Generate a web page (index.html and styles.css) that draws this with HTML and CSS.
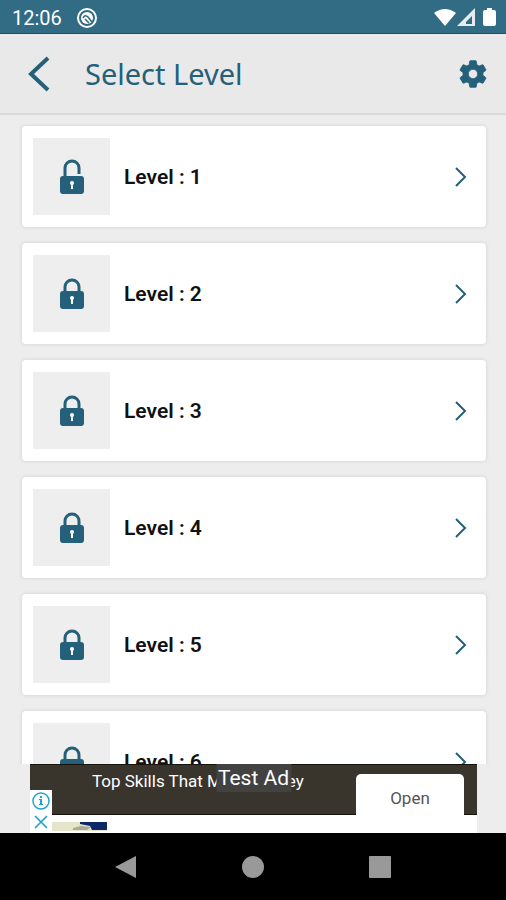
FILE: index.html
```html
<!DOCTYPE html>
<html lang="en">
<head>
<meta charset="utf-8">
<meta name="viewport" content="width=device-width, initial-scale=1">
<title>Select Level</title>
<link rel="stylesheet" href="styles.css">
</head>
<body>
<svg class="sprite" aria-hidden="true">
  <symbol id="lock" viewBox="0 0 26 36">
    <path d="M6 16v-5a7 7 0 0 1 14 0v5" fill="none" stroke="#246079" stroke-width="3"/>
    <rect x="1" y="15" width="24" height="18" rx="3" fill="#246079"/>
    <circle cx="13" cy="22" r="2" fill="#fff"/>
    <path d="M12 22h2v6h-2z" fill="#fff"/>
  </symbol>
  <symbol id="unlock" viewBox="0 0 26 36">
    <path d="M6 18V9a7 7 0 0 1 14 0v6" fill="none" stroke="#246079" stroke-width="3"/>
    <rect x="1" y="17" width="24" height="18" rx="3" fill="#246079"/>
    <circle cx="13" cy="24" r="2" fill="#fff"/>
    <path d="M12 24h2v6h-2z" fill="#fff"/>
  </symbol>
  <symbol id="chevron" viewBox="0 0 12 20">
    <path d="M1 1l9 9-9 9" fill="none" stroke="#246079" stroke-width="2"/>
  </symbol>
</svg>

<div class="status">
  <span class="clock">12:06</span>
  <svg class="app-icon" width="22" height="22" viewBox="0 0 22 22" aria-hidden="true">
    <circle cx="11" cy="11" r="9" fill="none" stroke="#fff" stroke-width="2"/>
    <circle cx="11" cy="11" r="6" fill="#fff"/>
    <path d="M7 11q2-4 5-1l4 5M9 12l4 4" fill="none" stroke="#316b84" stroke-width="1.6"/>
  </svg>
  <svg class="signals" width="64" height="22" viewBox="0 0 64 22" aria-hidden="true">
    <path d="M0 6Q11-2 22 6L11 19z" fill="#fff"/>
    <path d="M41 1v18H23z" fill="#e4edf0"/>
    <path d="M38 9v8h-6v-2z" fill="#316b84"/>
    <path d="M53 1h5v2h2q2 0 2 2v12q0 2-2 2h-9q-2 0-2-2V5q0-2 2-2h2z" fill="#fff"/>
  </svg>
</div>

<header class="bar">
  <button class="icon-button" aria-label="Back">
    <svg width="22" height="36" viewBox="0 0 22 36"><path d="M20 2L3 18l17 16" fill="none" stroke="#246079" stroke-width="4"/></svg>
  </button>
  <h1>Select Level</h1>
  <button class="icon-button" aria-label="Settings">
    <svg width="32" height="32" viewBox="0 0 24 24"><path fill="#246079" stroke="#246079" stroke-width=".6" d="M19.43 12.98c.04-.32.07-.64.07-.98s-.03-.66-.07-.98l2.11-1.65c.19-.15.24-.42.12-.64l-2-3.46c-.12-.22-.39-.3-.61-.22l-2.49 1c-.52-.4-1.08-.73-1.69-.98l-.38-2.65C14.46 2.18 14.25 2 14 2h-4c-.25 0-.46.18-.49.42l-.38 2.65c-.61.25-1.17.59-1.69.98l-2.49-1c-.23-.09-.49 0-.61.22l-2 3.46c-.13.22-.07.49.12.64l2.11 1.65c-.04.32-.07.65-.07.98s.03.66.07.98l-2.11 1.65c-.19.15-.24.42-.12.64l2 3.46c.12.22.39.3.61.22l2.49-1c.52.4 1.08.73 1.69.98l.38 2.65c.03.24.24.42.49.42h4c.25 0 .46-.18.49-.42l.38-2.65c.61-.25 1.17-.59 1.69-.98l2.49 1c.23.09.49 0 .61-.22l2-3.46c.12-.22.07-.49-.12-.64l-2.11-1.65zM12 15.5c-1.93 0-3.5-1.57-3.5-3.5s1.57-3.5 3.5-3.5 3.5 1.57 3.5 3.5-1.57 3.5-3.5 3.5z"/></svg>
  </button>
</header>

<main class="levels">
  <button class="level"><span class="thumb"><svg class="lock"><use href="#unlock"/></svg></span><span class="name">Level : 1</span><svg class="chevron"><use href="#chevron"/></svg></button>
  <button class="level"><span class="thumb"><svg class="lock"><use href="#lock"/></svg></span><span class="name">Level : 2</span><svg class="chevron"><use href="#chevron"/></svg></button>
  <button class="level"><span class="thumb"><svg class="lock"><use href="#lock"/></svg></span><span class="name">Level : 3</span><svg class="chevron"><use href="#chevron"/></svg></button>
  <button class="level"><span class="thumb"><svg class="lock"><use href="#lock"/></svg></span><span class="name">Level : 4</span><svg class="chevron"><use href="#chevron"/></svg></button>
  <button class="level"><span class="thumb"><svg class="lock"><use href="#lock"/></svg></span><span class="name">Level : 5</span><svg class="chevron"><use href="#chevron"/></svg></button>
  <button class="level"><span class="thumb"><svg class="lock"><use href="#lock"/></svg></span><span class="name">Level : 6</span><svg class="chevron"><use href="#chevron"/></svg></button>
</main>

<aside class="ad">
  <div class="ad-top">
    <span class="ad-title">Top Skills That Make Money</span>
    <a class="ad-open" href="#">Open</a>
  </div>
  <svg class="ad-image" width="56" height="9" viewBox="0 0 56 9" aria-hidden="true">
    <path d="M0 0h56v9H0z" fill="#e6e5cb"/>
    <path d="M29 0h27v8H41l-2-4-10-2z" fill="#0c2869"/>
    <path d="M22 6l8-2 10 1-4 3H22z" fill="#a9ab98"/>
  </svg>
  <span class="ad-label">Test Ad</span>
  <div class="ad-choices">
    <button aria-label="Ad information"><svg width="18" height="18" viewBox="0 0 18 18"><circle cx="9" cy="9" r="8" fill="none" stroke="#20a4cb" stroke-width="1.5"/><path d="M8 4h2v2H8zM7 7h3v5h1v1H7v-1h1V8H7z" fill="#20a4cb"/></svg></button>
    <button aria-label="Close ad"><svg width="18" height="18" viewBox="0 0 18 18"><path d="M3 3l12 12M15 3L3 15" stroke="#20a4cb" stroke-width="1.7"/></svg></button>
  </div>
</aside>

<nav class="system">
  <button aria-label="System back"><svg width="24" height="24" viewBox="0 0 24 24"><path d="M22 1v22L1 12z" fill="#999"/></svg></button>
  <button aria-label="Home"><svg width="24" height="24" viewBox="0 0 24 24"><circle cx="12" cy="12" r="11" fill="#999"/></svg></button>
  <button aria-label="Recent apps"><svg width="24" height="24" viewBox="0 0 24 24"><rect x="1" y="1" width="22" height="22" rx="1" fill="#999"/></svg></button>
</nav>
</body>
</html>
```
FILE: styles.css
```css
* {
  box-sizing: border-box;
}

body {
  margin: 0;
  height: 100vh;
  display: flex;
  flex-direction: column;
  overflow: hidden;
  background: #ededed;
  font-family: Roboto, "Liberation Sans", sans-serif;
}

button {
  padding: 0;
  border: 0;
  background: none;
  font: inherit;
  color: inherit;
}

svg {
  display: block;
}

.sprite {
  position: absolute;
  width: 0;
  height: 0;
}

.status {
  flex: none;
  display: flex;
  align-items: center;
  height: 34px;
  padding: 2px 8px 0 12px;
  background: #316b84;
  border-bottom: 1px solid #0f5473;
  color: #fff;
}

.clock {
  font-size: 20px;
}

.app-icon {
  margin-left: 14px;
}

.signals {
  margin-left: auto;
}

.bar {
  flex: none;
  display: flex;
  align-items: center;
  height: 81px;
  padding: 0 17px 0 28px;
  background: #e9e9e9;
  border-bottom: 2px solid #dadada;
}

h1 {
  flex: 1;
  margin: 0 0 0 35px;
  font: 400 29px/40px "Noto Sans", sans-serif;
  color: #246079;
}

.levels {
  flex: 1;
  min-height: 0;
  display: flex;
  flex-direction: column;
  gap: 16px;
  padding: 11px 20px 0 22px;
  overflow: hidden;
}

.level {
  flex: none;
  display: flex;
  align-items: center;
  padding: 12px 19px 12px 11px;
  background: #fff;
  border-radius: 4px;
  box-shadow: 0 0 4px rgba(0, 0, 0, 0.12);
  text-align: left;
}

.thumb {
  display: grid;
  place-items: center;
  width: 77px;
  height: 77px;
  background: #eee;
}

.lock {
  width: 26px;
  height: 36px;
}

.name {
  flex: 1;
  margin-left: 14px;
  font-size: 21px;
  font-weight: 600;
  color: #111;
}

.chevron {
  width: 12px;
  height: 20px;
}

.ad {
  flex: none;
  position: relative;
  height: 69px;
  margin: 0 29px 0 30px;
  background: #fff;
  overflow: hidden;
}

.ad-top {
  display: flex;
  justify-content: space-between;
  height: 51px;
  padding: 0 13px 0 62px;
  background: #39342c;
  border: solid #17140f;
  border-width: 1px 0;
}

.ad-title {
  font-size: 17px;
  line-height: 32px;
  color: #fff;
}

.ad-open {
  width: 108px;
  height: 50px;
  margin-top: 9px;
  border-radius: 5px 5px 0 0;
  background: #fff;
  color: #555;
  font-size: 17px;
  line-height: 48px;
  text-align: center;
  text-decoration: none;
}

.ad-image {
  margin: 7px 0 0 21px;
}

.ad-label {
  position: absolute;
  top: 0;
  left: 50%;
  transform: translateX(-50%);
  padding: 0 2px;
  background: #424242;
  color: #fff;
  font-size: 21px;
  line-height: 28px;
  white-space: nowrap;
}

.ad-choices {
  position: absolute;
  left: 0;
  bottom: 0;
  display: grid;
  gap: 3px;
  padding: 2px;
  background: #fff;
}

.system {
  flex: none;
  display: flex;
  justify-content: center;
  align-items: center;
  gap: 103px;
  height: 67px;
  background: #000;
}
```
